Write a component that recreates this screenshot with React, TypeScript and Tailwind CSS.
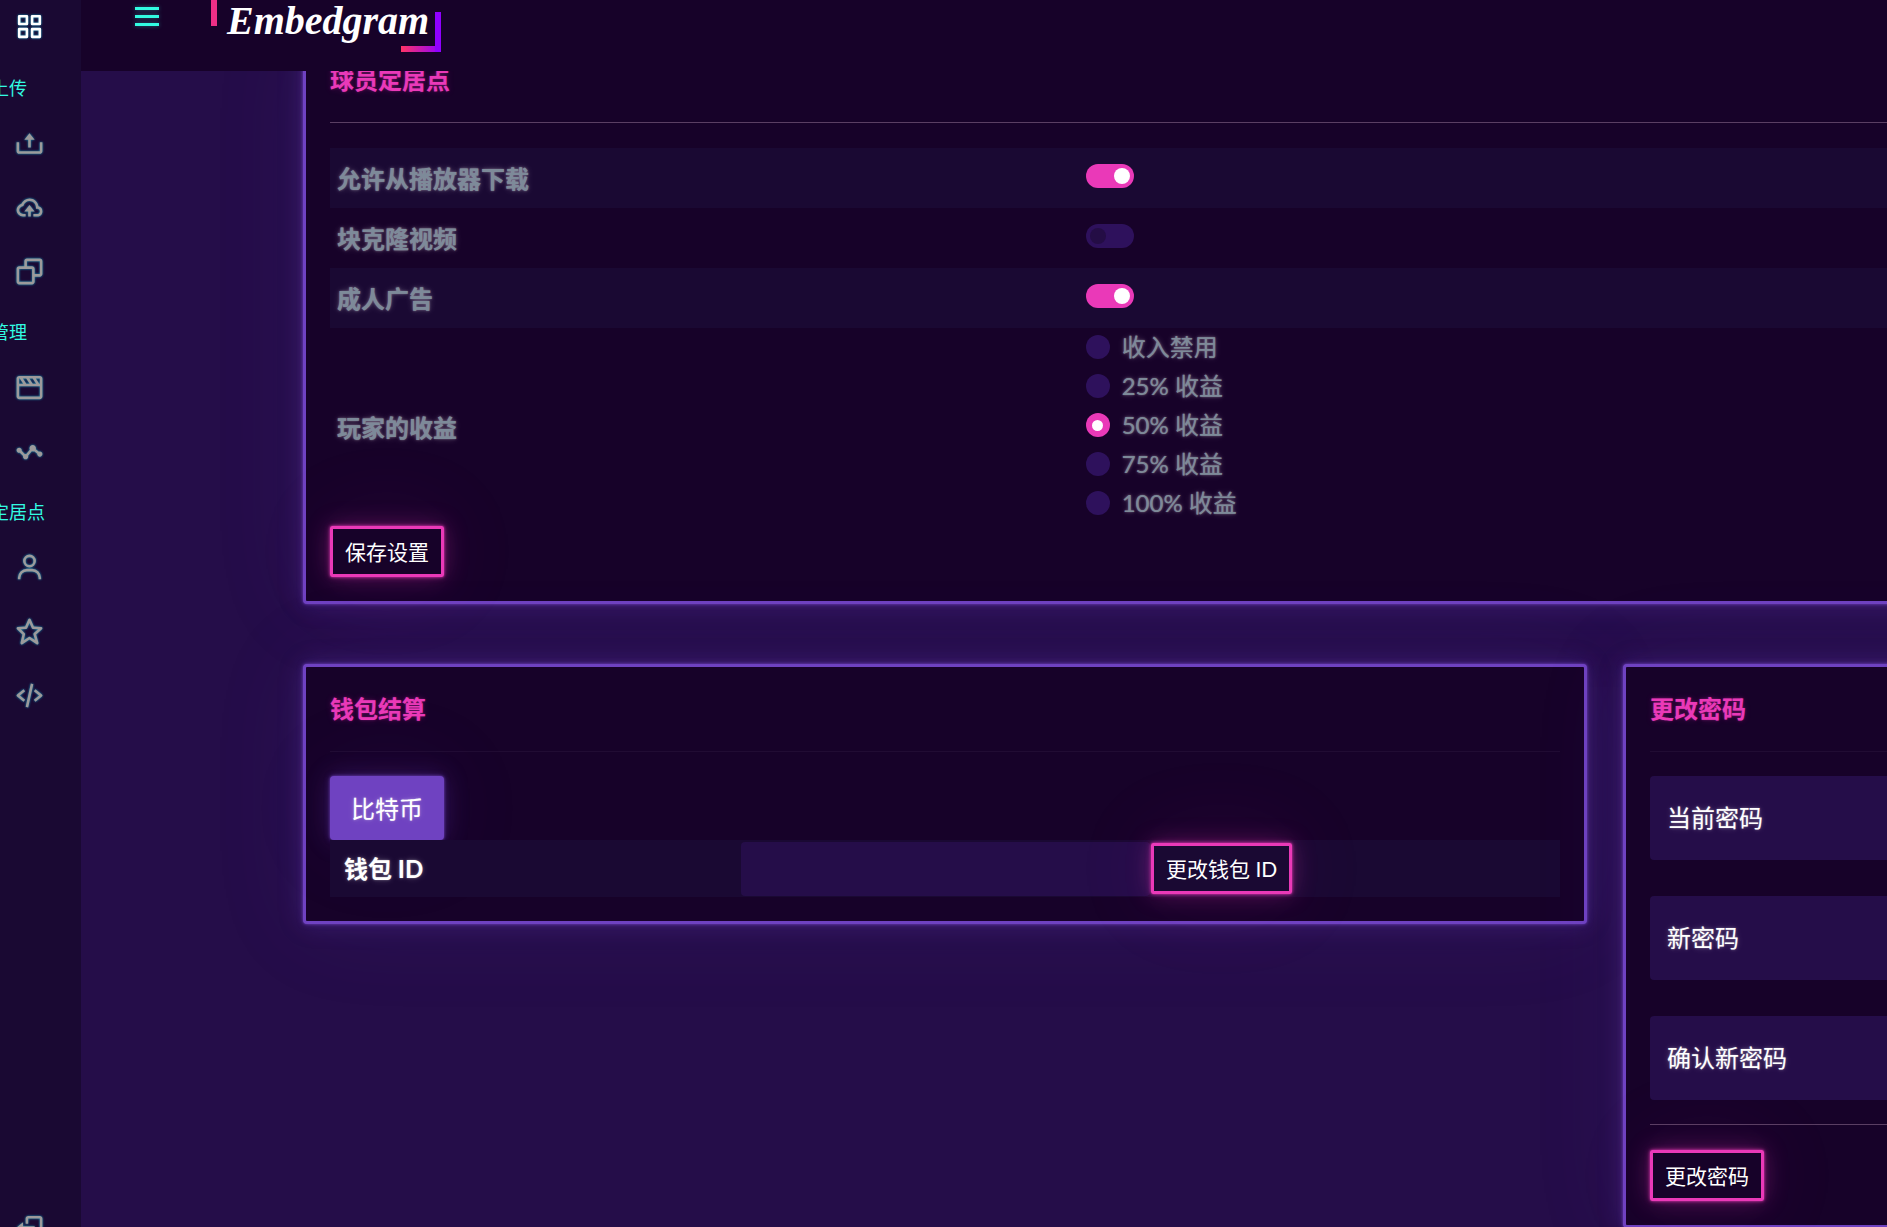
import React from 'react';
import {
  BiCloudUpload,
  BiCodeAlt,
  BiCopy,
  BiGridAlt,
  BiLogOut,
  BiMovie,
  BiStar,
  BiStats,
  BiUpload,
  BiUser,
} from 'react-icons/bi';
import type { IconType } from 'react-icons';

const glowPurple =
  'shadow-[0_0_3px_rgba(111,66,193,0.9),0_0_6px_rgba(111,66,193,0.4),0_0_24px_rgba(111,66,193,0.3),0_0_96px_rgba(111,66,193,0.1)]';
const glowPink =
  'shadow-[0_0_3px_rgba(234,57,184,0.9),0_0_6px_rgba(234,57,184,0.4),0_0_24px_rgba(234,57,184,0.3),0_0_96px_rgba(234,57,184,0.1)]';
const textGlow =
  '[text-shadow:0_0_1px_rgba(255,255,255,0.3),0_0_3px_rgba(255,255,255,0.3),0_0_7px_rgba(255,255,255,0.2)]';
const pinkTextGlow =
  '[text-shadow:0_0_1px_rgba(234,57,184,0.3),0_0_3px_rgba(234,57,184,0.3),0_0_7px_rgba(234,57,184,0.2)]';

function NavIcon({ icon: Icon, label, active = false }: { icon: IconType; label: string; active?: boolean }) {
  return (
    <a
      href="#"
      aria-label={label}
      className={`flex h-16 w-[59px] items-center justify-center drop-shadow-[0_0_1px_#1395ba] ${
        active ? 'text-white' : 'text-[#9c9a9b]'
      }`}
    >
      <Icon size={31} />
    </a>
  );
}

function NavLabel({ children }: { children: React.ReactNode }) {
  return (
    <div className="-ml-[9px] flex h-13 items-center pt-[5px] text-lg whitespace-nowrap text-[#32fbe2]">{children}</div>
  );
}

function Sidebar() {
  return (
    <nav className="flex w-[81px] shrink-0 flex-col overflow-hidden bg-[#1a0933]">
      <div className="-mt-[6px] mb-px">
        <NavIcon icon={BiGridAlt} label="仪表板" active />
      </div>
      <NavLabel>上传</NavLabel>
      <NavIcon icon={BiUpload} label="文件上传" />
      <NavIcon icon={BiCloudUpload} label="远程上传" />
      <NavIcon icon={BiCopy} label="克隆" />
      <NavLabel>管理</NavLabel>
      <NavIcon icon={BiMovie} label="视频" />
      <NavIcon icon={BiStats} label="统计" />
      <NavLabel>定居点</NavLabel>
      <NavIcon icon={BiUser} label="账户" />
      <NavIcon icon={BiStar} label="高级" />
      <NavIcon icon={BiCodeAlt} label="接口" />
      <div className="mt-auto -mb-8">
        <NavIcon icon={BiLogOut} label="登出" />
      </div>
    </nav>
  );
}

function Logo() {
  return (
    <a href="#" aria-label="Embedgram" className="relative ml-[52px] block h-[52px] w-[230px]">
      <svg className="absolute inset-0" width="230" height="52" viewBox="0 0 230 52" aria-hidden="true">
        <defs>
          <linearGradient id="corner" x1="190" x2="230" y1="0" y2="0" gradientUnits="userSpaceOnUse">
            <stop offset="0" stopColor="#ff3366" />
            <stop offset="1" stopColor="#9000ff" />
          </linearGradient>
        </defs>
        <rect x="0" y="0" width="6" height="26" fill="#ee2f86" />
        <rect x="190" y="46" width="40" height="6" fill="url(#corner)" />
        <rect x="224" y="12" width="6" height="40" fill="#9000ff" />
      </svg>
      <span className="absolute -top-1.5 left-4 font-['Liberation_Serif',serif] text-[40px] leading-[54px] font-bold text-white italic">
        Embedgram
      </span>
    </a>
  );
}

function Header() {
  return (
    <header className="relative z-10 flex h-[71px] items-start bg-[#170229] pl-[54px]">
      <button
        type="button"
        aria-label="菜单"
        className="mt-[7px] flex w-6 flex-col gap-[5px] drop-shadow-[0_0_2px_rgba(50,251,226,0.4)]"
      >
        <span className="h-[3px] w-full bg-[#32fbe2]" />
        <span className="h-[3px] w-full bg-[#32fbe2]" />
        <span className="h-[3px] w-full bg-[#32fbe2]" />
      </button>
      <Logo />
    </header>
  );
}

function Card({ title, bright = false, children }: { title: string; bright?: boolean; children: React.ReactNode }) {
  return (
    <section className={`rounded-sm border-3 border-[#6f42c1] bg-[#170229] p-6 ${glowPurple}`}>
      <h2 className={`text-2xl leading-9 font-bold text-[#ea39b8] ${pinkTextGlow}`}>{title}</h2>
      {bright ? <BrightRule /> : <hr className="my-6 border-t border-[#210c33]" />}
      {children}
    </section>
  );
}

function BrightRule() {
  return <hr className="mt-6 mb-[25px] border-t border-[#5a3f63]" />;
}

function OutlineButton({ children }: { children: React.ReactNode }) {
  return (
    <button
      type="button"
      className={`block h-[51px] rounded-xs border-3 border-[#ea39b8] px-3 text-[21px] leading-8 whitespace-nowrap text-white ${glowPink}`}
    >
      {children}
    </button>
  );
}

function SwitchRow({ id, label, on, striped }: { id: string; label: string; on: boolean; striped: boolean }) {
  return (
    <tr className={striped ? 'bg-[#1a0933]' : ''}>
      <th scope="row" className={`h-15 px-[7px] pt-[2px] text-left font-bold ${textGlow}`}>
        <label htmlFor={id}>{label}</label>
      </th>
      <td className="px-[6px] pt-4 align-top">
        <input
          id={id}
          type="checkbox"
          role="switch"
          defaultChecked={on}
          className="flex h-6 w-12 appearance-none items-center rounded-full bg-[#2e115c] px-1 before:size-4 before:rounded-full before:bg-[#240d45] checked:justify-end checked:bg-[#ea39b8] checked:before:bg-white"
        />
      </td>
    </tr>
  );
}

const revenueOptions = ['收入禁用', '25% 收益', '50% 收益', '75% 收益', '100% 收益'];

function PlayerSettings() {
  return (
    <Card title="球员定居点" bright>
      <table className="w-full table-fixed text-2xl text-[#7d8a99]">
        <colgroup>
          <col className="w-[29.4%]" />
          <col />
        </colgroup>
        <tbody>
          <SwitchRow id="download" label="允许从播放器下载" on striped />
          <SwitchRow id="clone" label="块克隆视频" on={false} striped={false} />
          <SwitchRow id="adult" label="成人广告" on striped />
          <tr>
            <th scope="row" id="revenue" className={`px-[7px] pt-[2px] text-left font-bold ${textGlow}`}>
              玩家的收益
            </th>
            <td className="px-[6px] pb-[3px]">
              <div role="radiogroup" aria-labelledby="revenue">
                {revenueOptions.map((option) => (
                  <label key={option} className={`flex h-[39px] items-center gap-3 pb-px ${textGlow}`}>
                    <input
                      type="radio"
                      name="revenue"
                      defaultChecked={option === '50% 收益'}
                      className="grid size-6 appearance-none place-content-center rounded-full bg-[#2e115c] checked:bg-[#ea39b8] checked:before:size-[11px] checked:before:rounded-full checked:before:bg-white"
                    />
                    {option}
                  </label>
                ))}
              </div>
            </td>
          </tr>
        </tbody>
      </table>
      <OutlineButton>保存设置</OutlineButton>
    </Card>
  );
}

function Wallet() {
  return (
    <Card title="钱包结算">
      <button
        type="button"
        className={`block h-16 rounded-sm bg-[#6f42c1] px-[21px] pt-[2px] text-2xl text-white ${textGlow} ${glowPurple}`}
      >
        比特币
      </button>
      <div className="grid h-[57px] grid-cols-3 items-center bg-[#1a0933]">
        <label htmlFor="wallet" className={`pl-[14px] text-2xl font-bold text-white ${textGlow}`}>
          钱包 ID
        </label>
        <input
          id="wallet"
          type="text"
          className="ml-px h-[54px] min-w-0 rounded-sm bg-[#250d49] px-4 text-2xl text-white outline-none"
        />
        <div className="justify-self-start pl-px">
          <OutlineButton>更改钱包 ID</OutlineButton>
        </div>
      </div>
    </Card>
  );
}

function PasswordField({ id, label }: { id: string; label: string }) {
  return (
    <div className="relative">
      <input
        id={id}
        type="password"
        className="block h-21 w-full rounded-sm bg-[#250d49] px-[17px] text-2xl text-white outline-none"
      />
      <label
        htmlFor={id}
        className={`absolute inset-y-0 left-[17px] flex items-center text-2xl text-white ${textGlow}`}
      >
        {label}
      </label>
    </div>
  );
}

function ChangePassword() {
  return (
    <Card title="更改密码">
      <div className="flex flex-col gap-9">
        <PasswordField id="current" label="当前密码" />
        <PasswordField id="new" label="新密码" />
        <PasswordField id="confirm" label="确认新密码" />
      </div>
      <BrightRule />
      <OutlineButton>更改密码</OutlineButton>
    </Card>
  );
}

export default function App() {
  return (
    <div className="flex h-screen overflow-hidden bg-[#250d49] font-['Lato','Noto_Sans_CJK_SC',sans-serif]" lang="zh-CN">
      <Sidebar />
      <div className="min-w-0 flex-1">
        <Header />
        <main className="-mt-9 ml-[222px] w-[138vw]">
          <PlayerSettings />
          <div className="mt-15 grid grid-cols-2 items-start gap-9">
            <Wallet />
            <ChangePassword />
          </div>
        </main>
      </div>
    </div>
  );
}
